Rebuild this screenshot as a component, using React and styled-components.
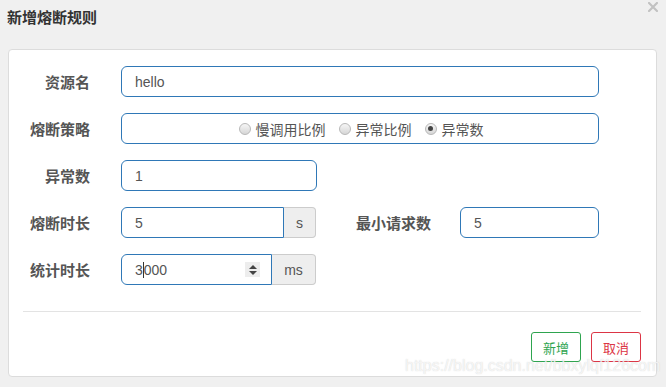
import React from 'react'
import styled, { createGlobalStyle } from 'styled-components'

const GlobalStyle = createGlobalStyle`
    html, body {
        margin : 0;
        padding : 0;
        background : #f0f0f0;
    }
    body {
        font-family : "Liberation Sans", "Noto Sans CJK SC", sans-serif;
        color : #555;
    }
`

const Page = styled.div`
    position : relative;
    width : 666px;
    height : 387px;
    overflow : hidden;
    background : #f0f0f0;
`

const Header = styled.div`
    display : flex;
    justify-content : space-between;
    align-items : flex-start;
    height : 49px;
    padding : 0 8px 0 7px;
    box-sizing : border-box;
`

const Title = styled.h4`
    margin : 8px 0 0 0;
    font-size : 15px;
    line-height : 19px;
    font-weight : bold;
    color : #333;
`

const Close = styled.svg`
    width : 10px;
    height : 10px;
    margin-top : 2px;
`

const Card = styled.div`
    margin : 0 9px 0 8px;
    background : #fff;
    border : 1px solid #dcdcdc;
    border-radius : 4px;
    padding : 16px 15px 14px 0;
`

const Form = styled.div`
    display : flex;
    flex-direction : column;
    gap : 16px;
`

const Row = styled.div`
    display : flex;
    align-items : center;
`

const Label = styled.label`
    width : ${p => p.$w || 81}px;
    margin-right : ${p => p.$gap || 31}px;
    text-align : right;
    font-size : 15px;
    font-weight : bold;
    color : #555;
    flex-shrink : 0;
`

const Field = styled.div`
    display : flex;
    align-items : center;
    justify-content : ${p => p.$center ? 'center' : 'flex-start'};
    width : ${p => p.$w}px;
    height : 31px;
    box-sizing : border-box;
    padding : 0 ${p => p.$pr || 13}px 0 13px;
    border : 1px solid #2f78b7;
    border-radius : ${p => p.$group ? '6px 0 0 6px' : '6px'};
    font-size : 14px;
    color : #555;
    background : #fff;
`

const Value = styled.span`
    flex : 1;
    display : flex;
    align-items : center;
`

const Caret = styled.span`
    display : inline-block;
    width : 1px;
    height : 16px;
    background : #333;
`

const Spinner = styled.span`
    display : flex;
    flex-direction : column;
    align-items : center;
    justify-content : center;
    gap : 2px;
    width : 15px;
    height : 15px;
    background : #ededed;
`

const Arrow = styled.span`
    width : 0;
    height : 0;
    border-left : 4px solid transparent;
    border-right : 4px solid transparent;
    ${p => p.$up ? 'border-bottom : 4px solid #444;' : 'border-top : 4px solid #444;'}
`

const Group = styled.div`
    display : flex;
    width : 195px;
`

const Addon = styled.span`
    flex : 1;
    display : flex;
    align-items : center;
    justify-content : center;
    height : 31px;
    box-sizing : border-box;
    background : #eee;
    border : 1px solid #ccc;
    border-left : none;
    border-radius : 0 4px 4px 0;
    font-size : 14px;
    color : #555;
`

const Radios = styled.div`
    display : flex;
    align-items : center;
    gap : 13px;
    margin-left : 2px;
    font-size : 14px;
    color : #555;
`

const RadioItem = styled.span`
    display : flex;
    align-items : center;
    gap : 5px;
`

const Dot = styled.span`
    display : inline-flex;
    align-items : center;
    justify-content : center;
    width : 12px;
    height : 12px;
    box-sizing : border-box;
    border-radius : 50%;
    border : 1px solid #b8b8b8;
    background : linear-gradient(#f6f6f6, #d6d6d6);

    &::after {
        content : '';
        width : 5px;
        height : 5px;
        border-radius : 50%;
        background : ${p => p.$checked ? '#444' : 'transparent'};
    }
`

const Divider = styled.hr`
    margin : 26px 0 20px 14px;
    border : none;
    border-top : 1px solid #e3e3e3;
`

const Footer = styled.div`
    display : flex;
    justify-content : flex-end;
    gap : 10px;
`

const Button = styled.button`
    width : 50px;
    height : 30px;
    padding : 0;
    background : #fff;
    border : 1px solid ${p => p.$color};
    border-radius : 3px;
    color : ${p => p.$color};
    font-family : inherit;
    font-size : 13px;
`

const Watermark = styled.span`
    position : absolute;
    left : 405px;
    top : 357px;
    font-size : 16px;
    color : rgba(255, 255, 255, 0.75);
    text-shadow : 0 0 1px rgba(170, 170, 170, 0.55);
    white-space : nowrap;
`

export default function App() {
  return (
    <Page>
        <GlobalStyle />
        <Header>
            <Title>新增熔断规则</Title>
            <Close viewBox="0 0 10 10" aria-label="关闭">
                <path d="M1 1 L9 9 M9 1 L1 9" stroke="#c2c2c2" strokeWidth="2.2" strokeLinecap="square" />
            </Close>
        </Header>
        <Card>
            <Form>
                <Row>
                    <Label>资源名</Label>
                    <Field $w={478}>hello</Field>
                </Row>
                <Row>
                    <Label>熔断策略</Label>
                    <Field $w={478} $center>
                        <Radios>
                            <RadioItem><Dot />慢调用比例</RadioItem>
                            <RadioItem><Dot />异常比例</RadioItem>
                            <RadioItem><Dot $checked />异常数</RadioItem>
                        </Radios>
                    </Field>
                </Row>
                <Row>
                    <Label>异常数</Label>
                    <Field $w={196}>1</Field>
                </Row>
                <Row>
                    <Label>熔断时长</Label>
                    <Group>
                        <Field $w={163} $group>5</Field>
                        <Addon>s</Addon>
                    </Group>
                    <Label $w={115} $gap={29}>最小请求数</Label>
                    <Field $w={139}>5</Field>
                </Row>
                <Row>
                    <Label>统计时长</Label>
                    <Group>
                        <Field $w={151} $group $pr={11}>
                            <Value>3<Caret />000</Value>
                            <Spinner><Arrow $up /><Arrow /></Spinner>
                        </Field>
                        <Addon>ms</Addon>
                    </Group>
                </Row>
            </Form>
            <Divider />
            <Footer>
                <Button $color="#2ea44f">新增</Button>
                <Button $color="#dc3545">取消</Button>
            </Footer>
        </Card>
        <Watermark>https://blog.csdn.net/bbxylqf126com</Watermark>
    </Page>
  )
}
